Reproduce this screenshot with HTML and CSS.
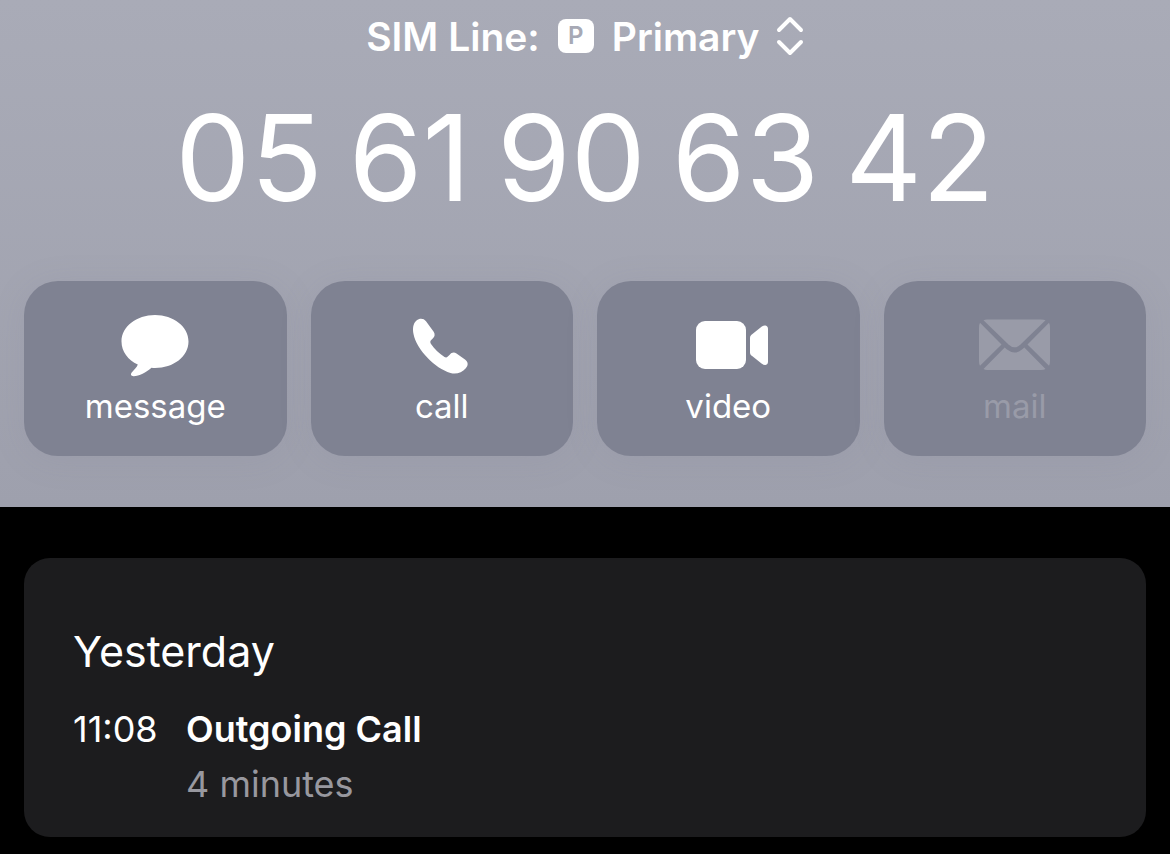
FILE: index.html
```html
<!DOCTYPE html>
<html lang="en">
<head>
    <meta charset="UTF-8">
    <meta name="viewport" content="width=device-width, initial-scale=1.0">
    <title>05 61 90 63 42</title>
    <link rel="stylesheet" href="styles.css">
</head>
<body>
    <header class="contact">
        <div class="sim-line">
            <label for="sim">SIM Line:</label>
            <span class="sim-badge">P</span>
            <select id="sim">
                <option>Primary</option>
            </select>
            <svg class="sim-arrows" width="28" height="40" viewBox="0 0 28 40" aria-hidden="true">
                <path d="M3 14L14 3L25 14M3 26L14 37L25 26"/>
            </svg>
        </div>
        <h1>
            <span>05</span>
            <span>61</span>
            <span>90</span>
            <span>63</span>
            <span>42</span>
        </h1>
        <div class="actions">
            <button type="button">
                <svg width="72" height="64" viewBox="0 0 72 64" aria-hidden="true">
                    <path d="M36 2C54.500 2 69.500 13.500 69.500 28.500C69.500 43.500 54.500 55 36 55Q34 55 32.500 54.800C27 59.500 20 63.300 14.500 63.200C12 63.100 11.300 61.200 12.700 59.500C15.500 56.500 18 54 18.800 51.500C9 47 2.500 38.500 2.500 28.500C2.500 13.500 17.500 2 36 2Z"/>
                </svg>
                message
            </button>
            <button type="button">
                <svg width="72" height="64" viewBox="0 0 72 64" aria-hidden="true">
                    <path d="M10.500 7.500C13.500 5 17.500 5 20 8.200L27.500 18.500C29.200 21 29 23.500 27 25.300L25 27.300C24 28.400 24.200 29.800 25 31C28.500 36.300 33.500 40.800 38.500 43.900C39.800 44.700 40.800 44.500 41.800 43.500L43.700 41.700C45.500 39.500 48 38.900 50.500 40.500L59 46.500C62.300 49 62.500 52.300 59.800 55.200C56 59.700 50 61.500 44.500 59.900C29 55.500 10.500 36.500 7.500 21C6.500 15.500 7 10.500 10.500 7.500Z"/>
                </svg>
                call
            </button>
            <button type="button">
                <svg width="80" height="64" viewBox="-8 0 80 64" aria-hidden="true">
                    <rect x="0" y="8" width="50" height="48" rx="9"/>
                    <path d="M54 24.500Q54 23 55.200 22L65.500 13.700Q67.500 12.200 69.500 12.500Q72 13 72 16V48.500Q72 51.500 69.500 52Q67.500 52.200 65.500 50.600L55.200 42.200Q54 41.200 54 39.700Z"/>
                </svg>
                video
            </button>
            <button type="button" disabled>
                <svg width="72" height="64" viewBox="0 0 72 64" aria-hidden="true">
                    <path d="M4.500 7.300Q6 6.500 8 6.500H62Q65 6.500 66.500 7.300L41.500 31.500Q35.500 37.200 29.500 31.500Z"/>
                    <path d="M0 15Q0 11.500 1 9.800L22.500 31.500L1 52.800Q0 51.500 0 48Z"/>
                    <path d="M71 15Q71 11.500 70 9.800L48.500 31.500L70 52.800Q71 51.500 71 48Z"/>
                    <path d="M4.500 56L25.700 34.500L28 36.600Q35.500 42.500 43 36.600L45.300 34.500L66.500 56Q65 57 62 57H8Q6 57 4.500 56Z"/>
                </svg>
                mail
            </button>
        </div>
    </header>
    <main>
        <section class="history">
            <h2>Yesterday</h2>
            <div class="call-row">
                <time>11:08</time>
                <div>
                    <strong>Outgoing Call</strong>
                    <p>4 minutes</p>
                </div>
            </div>
        </section>
    </main>
</body>
</html>
```
FILE: styles.css
```css
* {
    box-sizing: border-box;
}
body {
    margin: 0;
    background-color: #000;
    color: #fff;
    font-family: Inter, "Liberation Sans", sans-serif;
}
h1, h2, p {
    margin: 0;
    font-weight: 400;
}
.contact {
    padding: 12px 24px 51px;
    background: linear-gradient(#a9abb7, #9ea0ad);
}
.sim-line {
    display: flex;
    justify-content: center;
    align-items: center;
    height: 48px;
    font-size: 39px;
    font-weight: 600;
}
.sim-badge {
    width: 36px;
    height: 34px;
    margin: 0 18px;
    border-radius: 8px;
    background-color: #fff;
    color: #a7a9b5;
    font-size: 24px;
    line-height: 34px;
    text-align: center;
}
.sim-line select {
    margin: 0 16px 0 0;
    padding: 0;
    border: none;
    background: none;
    color: inherit;
    font: inherit;
    appearance: none;
}
.sim-arrows {
    fill: none;
    stroke: #fff;
    stroke-width: 4;
    stroke-linecap: round;
    stroke-linejoin: round;
}
h1 {
    display: flex;
    justify-content: center;
    gap: 26px;
    margin: 26px 0 51px;
    font-size: 119px;
    line-height: 144px;
}
.actions {
    display: grid;
    grid-template-columns: repeat(4, 1fr);
    gap: 24px;
}
.actions button {
    display: flex;
    flex-direction: column;
    align-items: center;
    gap: 9px;
    padding: 32px 0 30px;
    border: none;
    border-radius: 34px;
    background-color: #7f8292;
    box-shadow: 0 4px 32px rgba(128, 130, 146, 0.15);
    color: #fff;
    font: inherit;
    font-size: 33px;
    line-height: 40px;
    cursor: pointer;
}
.actions button:disabled {
    color: #999ba8;
    cursor: default;
}
.actions svg {
    fill: currentColor;
}
main {
    padding: 51px 24px 17px;
}
.history {
    padding: 64px 49px 25px;
    border-radius: 26px;
    background-color: #1c1c1e;
}
h2 {
    margin-bottom: 22px;
    font-size: 43px;
    line-height: 58px;
}
.call-row {
    display: grid;
    grid-template-columns: 87px 1fr;
    gap: 26px;
    font-size: 36px;
    line-height: 55px;
}
.call-row strong {
    font-weight: 600;
}
.call-row p {
    color: #98989f;
}
```
